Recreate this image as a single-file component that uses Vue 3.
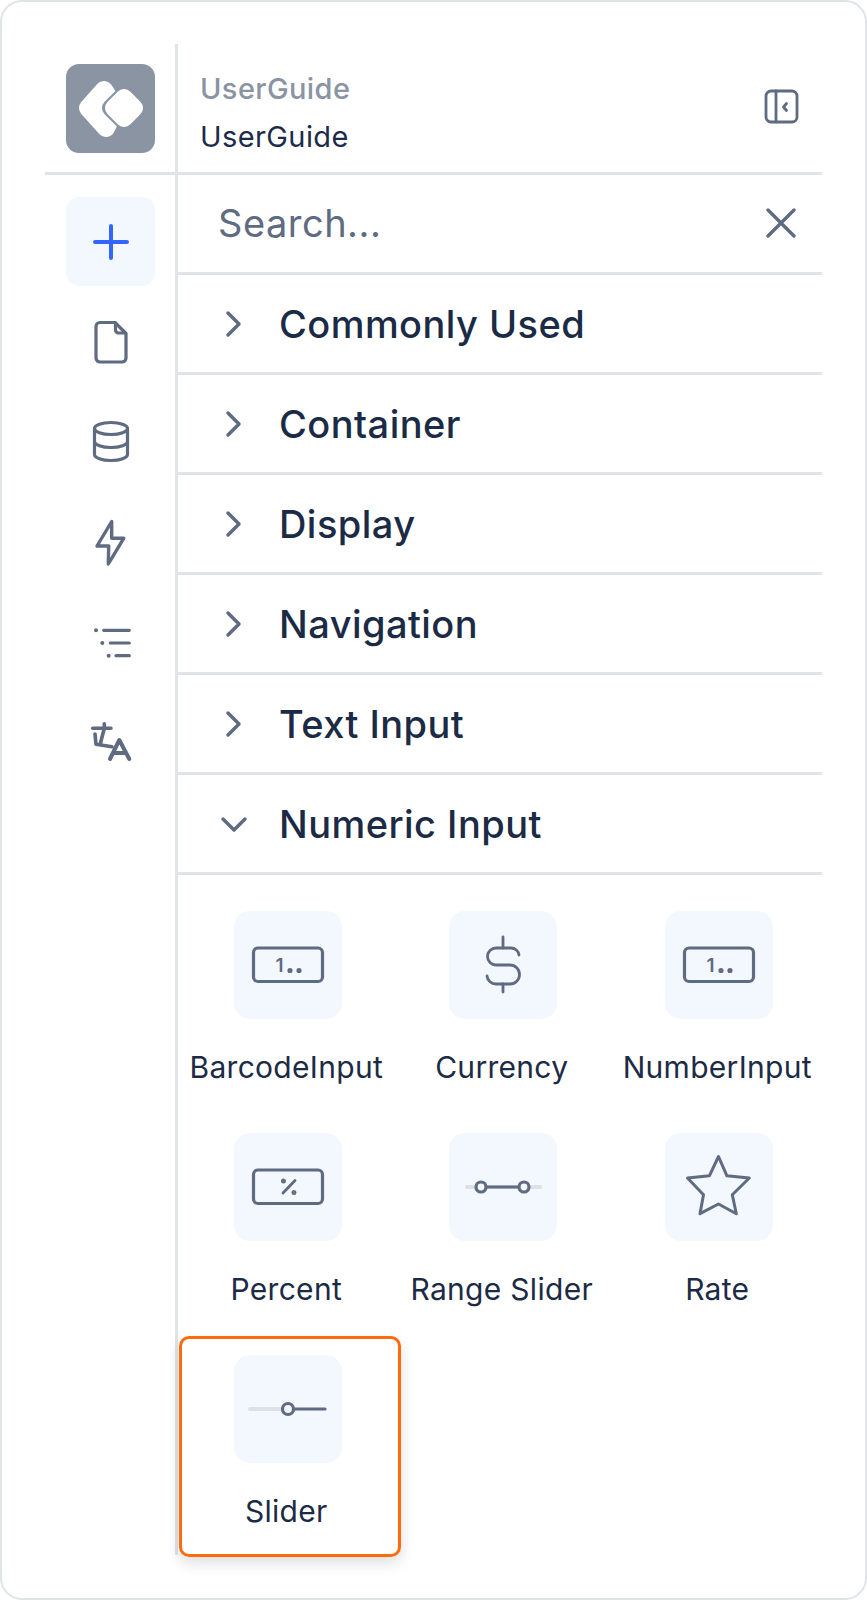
<script setup>
import { ref } from 'vue'

const sections = ['Commonly Used', 'Container', 'Display', 'Navigation', 'Text Input']
const widgets = ref([
  { name: 'BarcodeInput', icon: 'number' },
  { name: 'Currency', icon: 'dollar' },
  { name: 'NumberInput', icon: 'number' },
  { name: 'Percent', icon: 'percent' },
  { name: 'Range Slider', icon: 'range' },
  { name: 'Rate', icon: 'star' },
  { name: 'Slider', icon: 'slider', selected: true },
])
</script>

<template>
  <div class="frame">
    <div class="panel">
      <header class="head">
        <div class="head-logo">
          <div class="logo">
            <svg width="89" height="89" viewBox="0 0 89 89">
              <polygon points="38,26 22,44 40,64 50,44" fill="#fff" stroke="#fff" stroke-width="18" stroke-linejoin="round" />
              <polygon points="58,31 45,44 58,57 71,44" fill="#8a94a3" stroke="#8a94a3" stroke-width="18" stroke-linejoin="round" />
              <polygon points="58,34 48,44 58,54 68,44" fill="#fff" stroke="#fff" stroke-width="18" stroke-linejoin="round" />
            </svg>
          </div>
        </div>
        <div class="head-titles">
          <div class="title-muted">UserGuide</div>
          <div class="title-main">UserGuide</div>
        </div>
        <svg class="collapse" width="35" height="35" viewBox="0 0 35 35" fill="none" stroke="#5f6b80" stroke-width="2.800" stroke-linecap="round" stroke-linejoin="round">
          <rect x="2" y="2" width="31" height="31" rx="5" />
          <path d="M12 2v31" />
          <path d="M22.500 14.500l-3 3.500 3 3.500" />
        </svg>
      </header>

      <div class="body">
        <nav class="rail">
          <div class="rail-item active">
            <svg width="48" height="48" viewBox="0 0 48 48" fill="none" stroke="#3366ff" stroke-width="4" stroke-linecap="round">
              <path d="M24 8v32M8 24h32" />
            </svg>
          </div>
          <div class="rail-item">
            <svg width="48" height="48" viewBox="0 0 48 48" fill="none" stroke="#5f6b80" stroke-width="3.200" stroke-linecap="round" stroke-linejoin="round">
              <path d="M13 4.500h15l11 11v24.500a4 4 0 0 1-4 4H13a4 4 0 0 1-4-4V8.500a4 4 0 0 1 4-4z" />
              <path d="M28.500 5v7a3 3 0 0 0 3 3h7" />
            </svg>
          </div>
          <div class="rail-item">
            <svg width="48" height="48" viewBox="0 0 48 48" fill="none" stroke="#5f6b80" stroke-width="3.200" stroke-linecap="round" stroke-linejoin="round">
              <ellipse cx="24" cy="10.500" rx="16.500" ry="6" />
              <path d="M7.500 10.500v26c0 3.300 7.400 6 16.500 6s16.500-2.700 16.500-6v-26" />
              <path d="M7.500 23.500c0 3.300 7.400 6 16.500 6s16.500-2.700 16.500-6" />
            </svg>
          </div>
          <div class="rail-item">
            <svg width="48" height="48" viewBox="0 0 48 48" fill="none" stroke="#5f6b80" stroke-width="3.400" stroke-linecap="round" stroke-linejoin="round">
              <path d="M24.700 3.500L10 28h11.700l-.4 18L36.700 20.300H24.700z" />
            </svg>
          </div>
          <div class="rail-item">
            <svg width="48" height="48" viewBox="0 0 48 48" fill="none" stroke="#5f6b80" stroke-width="3.200" stroke-linecap="round">
              <path d="M16.700 12.300h25.600M23.300 25h19M29 37.700h13.300" />
              <circle cx="9" cy="12.300" r="2" fill="#5f6b80" stroke="none" />
              <circle cx="15.300" cy="25" r="2" fill="#5f6b80" stroke="none" />
              <circle cx="21.700" cy="37.700" r="2" fill="#5f6b80" stroke="none" />
            </svg>
          </div>
          <div class="rail-item">
            <svg width="48" height="48" viewBox="0 0 48 48" fill="none" stroke="#5f6b80" stroke-width="3.600" stroke-linecap="round" stroke-linejoin="round">
              <path d="M5.700 10.300H24M17.300 5.700v4.600L13 27M8 16l1 10.300L25 28.700" />
              <path d="M23 41L32.300 22l10 19M26.500 35h12" stroke-width="4" />
            </svg>
          </div>
        </nav>

        <main class="content">
          <div class="search">
            <span class="search-text">Search...</span>
            <svg width="30" height="30" viewBox="0 0 30 30" fill="none" stroke="#5f6b80" stroke-width="3.400" stroke-linecap="round">
              <path d="M2 2l26 26M28 2L2 28" />
            </svg>
          </div>

          <div v-for="s in sections" :key="s" class="section">
            <svg class="chev" width="24" height="28" viewBox="0 0 24 28" fill="none" stroke="#5f6b80" stroke-width="3.500" stroke-linecap="round" stroke-linejoin="round">
              <path d="M6 3l11 11L6 25" />
            </svg>
            <span>{{ s }}</span>
          </div>
          <div class="section">
            <svg class="chev" width="24" height="28" viewBox="0 0 24 28" fill="none" stroke="#5f6b80" stroke-width="3.500" stroke-linecap="round" stroke-linejoin="round">
              <path d="M1 9l11 11L23 9" />
            </svg>
            <span>Numeric Input</span>
          </div>

          <div class="grid">
            <div v-for="w in widgets" :key="w.name" class="widget">
              <div class="tile">
                <svg width="108" height="108" viewBox="0 0 108 108" fill="none" stroke="#5f6b80" stroke-width="3.200" stroke-linecap="round" stroke-linejoin="round">
                  <template v-if="w.icon === 'number'">
                    <rect x="19.500" y="37" width="69" height="33.500" rx="4.500" />
                    <text x="45.500" y="61" class="num" text-anchor="middle">1</text>
                    <circle cx="56" cy="59.500" r="1" fill="#5f6b80" />
                    <circle cx="65" cy="59.500" r="1" fill="#5f6b80" />
                  </template>
                  <template v-else-if="w.icon === 'percent'">
                    <rect x="19.500" y="37" width="69" height="33.500" rx="4.500" />
                    <path d="M49 60l12-12.500" stroke-width="2.800" />
                    <circle cx="49.500" cy="48" r="0.900" fill="#5f6b80" />
                    <circle cx="60" cy="59.500" r="0.900" fill="#5f6b80" />
                  </template>
                  <template v-else-if="w.icon === 'dollar'">
                    <path d="M54 26v11M54 73v8" stroke-width="2.800" />
                    <path d="M70 44a8 8 0 0 0-8-7H47a8.500 8.500 0 0 0 0 17h14a9.500 9.500 0 0 1 0 19H47a9 9 0 0 1-9-8" stroke-width="2.800" />
                  </template>
                  <template v-else-if="w.icon === 'range'">
                    <path d="M18 54h73" stroke="#dde0e5" stroke-width="4" />
                    <path d="M32 54h43" />
                    <circle cx="32" cy="54" r="5" fill="#f3f7fe" />
                    <circle cx="75" cy="54" r="5" fill="#f3f7fe" />
                  </template>
                  <template v-else-if="w.icon === 'star'">
                    <path d="M53.500 23.500l8.300 19.200 22.500 2.300-17 16.700 4 19-17.800-9.700-18.500 9.700 3.500-19-16-16.700 22-2.300z" stroke-width="3" />
                  </template>
                  <template v-else>
                    <path d="M16 54h38" stroke="#dde0e5" stroke-width="4" />
                    <path d="M54 54h37" />
                    <circle cx="54" cy="54" r="5.500" fill="#f3f7fe" />
                  </template>
                </svg>
              </div>
              <div class="label">{{ w.name }}</div>
              <div v-if="w.selected" class="highlight"></div>
            </div>
          </div>
        </main>
      </div>
    </div>
  </div>
</template>

<style>
html, body {
  margin: 0;
  background: #fff;
}
</style>

<style scoped>
* {
  box-sizing: border-box;
}
.frame {
  width: 867px;
  height: 1600px;
  border: 2px solid #e0e3e8;
  border-radius: 22px;
  padding: 42px 43px 0;
  background: #fff;
  font-family: Inter, 'Liberation Sans', sans-serif;
  color: #1c2b45;
}
.panel {
  width: 777px;
  height: 1511px;
  display: flex;
  flex-direction: column;
}
.head {
  flex: none;
  height: 131px;
  display: flex;
  align-items: stretch;
  border-bottom: 3px solid #e0e3e8;
  position: relative;
}
.head-logo {
  width: 133px;
  border-right: 3px solid #e0e3e8;
  padding: 20px 0 0 21px;
}
.logo {
  width: 89px;
  height: 89px;
  border-radius: 13px;
  background: #8a94a3;
  overflow: hidden;
}
.head-titles {
  flex: 1;
  padding: 21px 0 0 22px;
  font-size: 29px;
  letter-spacing: 0.4px;
  line-height: 48px;
}
.title-muted {
  color: #8a94a3;
  font-weight: 500;
}
.title-main {
  color: #1c2b4a;
}
.collapse {
  align-self: flex-start;
  margin: 45px 23px 0 0;
}
.body {
  flex: 1;
  display: flex;
  min-height: 0;
}
.rail {
  width: 133px;
  flex: none;
  border-right: 3px solid #e0e3e8;
  padding: 22px 0 0 21px;
  display: flex;
  flex-direction: column;
  gap: 11px;
}
.rail-item {
  width: 89px;
  height: 89px;
  border-radius: 13px;
  display: flex;
  align-items: center;
  justify-content: center;
}
.rail-item.active {
  background: #f3f7fe;
}
.content {
  flex: 1;
  min-width: 0;
}
.search {
  height: 100px;
  border-bottom: 3px solid #e0e3e8;
  display: flex;
  align-items: center;
  justify-content: space-between;
  padding: 0 26px 2px 40px;
}
.search-text {
  font-size: 38px;
  letter-spacing: 0.5px;
  color: #5f6b80;
}
.section {
  height: 100px;
  border-bottom: 3px solid #e0e3e8;
  display: flex;
  align-items: center;
  padding: 0 0 0 44px;
  font-size: 38px;
  letter-spacing: 0.45px;
  font-weight: 500;
}
.chev {
  overflow: visible;
  margin-right: 33px;
}
.grid {
  display: grid;
  grid-template-columns: repeat(3, 215.500px);
  grid-auto-rows: 222px;
  padding: 36px 0 0 2px;
}
.widget {
  position: relative;
  display: flex;
  flex-direction: column;
  align-items: center;
}
.tile {
  width: 108px;
  height: 108px;
  border-radius: 16px;
  background: #f3f7fe;
}
.label {
  margin: 28px 3px 0 0;
  font-size: 30px;
  letter-spacing: 0.3px;
  line-height: 40px;
  white-space: nowrap;
}
.num {
  font-size: 19px;
  font-weight: 600;
  fill: #5f6b80;
  stroke: none;
}
.highlight {
  position: absolute;
  left: -1.500px;
  top: -19px;
  width: 222px;
  height: 221px;
  border: 3.500px solid #ff6a0a;
  border-radius: 10px;
  box-shadow: 0 6px 14px rgba(20, 30, 50, 0.14);
}
</style>
